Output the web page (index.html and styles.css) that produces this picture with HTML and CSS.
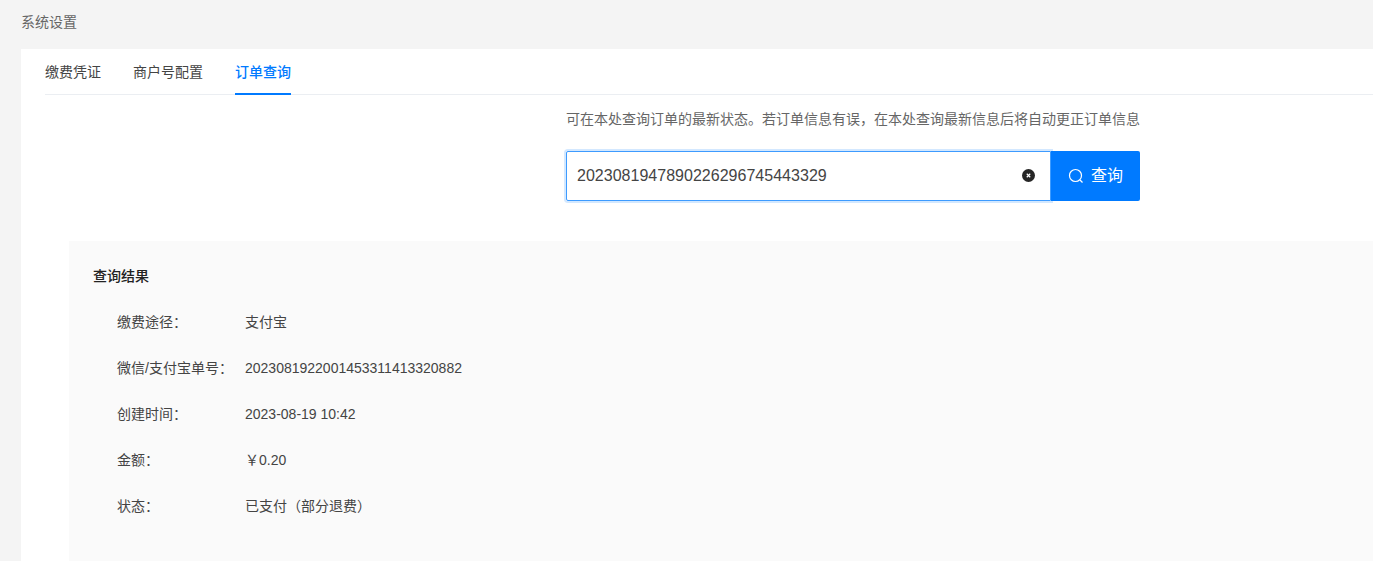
FILE: index.html
```html
<!DOCTYPE html>
<html>
	<head>
		<meta charset="utf-8" />
		<title>系统设置</title>
		<link rel="stylesheet" href="styles.css">
	</head>
	<body>
		<div class="crumb">系统设置</div>
		<div class="card">
			<ul class="tabs">
				<li>缴费凭证</li>
				<li>商户号配置</li>
				<li class="active">订单查询</li>
			</ul>

			<!--查询-->
			<div class="search">
				<p class="tip">可在本处查询订单的最新状态。若订单信息有误，在本处查询最新信息后将自动更正订单信息</p>
				<div class="search-bar">
					<div class="search-input">
						<span class="order-no">2023081947890226296745443329</span>
						<svg class="clear" width="13" height="13" viewBox="0 0 12 12">
							<circle cx="6" cy="6" r="6" fill="#262626"/>
							<path d="M4.4 4.4l3.2 3.2M7.6 4.4l-3.2 3.2" stroke="#fff" stroke-width="1.1" fill="none"/>
						</svg>
					</div>
					<button class="search-btn">
						<svg width="16" height="16" viewBox="0 0 16 16">
							<circle cx="7.5" cy="7.5" r="6" stroke="#fff" stroke-width="1.2" fill="none"/>
							<path d="M12 12l2.5 2.5" stroke="#fff" stroke-width="1.2" fill="none"/>
						</svg>
						<span class="btn-text">查询</span>
					</button>
				</div>
			</div>

			<!--查询结果-->
			<div class="result">
				<h3>查询结果</h3>
				<div class="row"><span class="label">缴费途径：</span><span>支付宝</span></div>
				<div class="row"><span class="label">微信/支付宝单号：</span><span>2023081922001453311413320882</span></div>
				<div class="row"><span class="label">创建时间：</span><span>2023-08-19 10:42</span></div>
				<div class="row"><span class="label">金额：</span><span>￥0.20</span></div>
				<div class="row"><span class="label">状态：</span><span>已支付（部分退费）</span></div>
			</div>
		</div>
	</body>
</html>
```

FILE: styles.css
```css
*{
	padding: 0;
	margin: 0;
	box-sizing: border-box;
}
ul{
	list-style: none;
}
html, body{
	height: 561px;
	overflow: hidden;
}
body{
	background-color: #f4f4f4;
	font-family: "Liberation Sans", "Noto Sans CJK SC", sans-serif;
	font-size: 14px;
	color: #444;
}
.crumb{
	height: 49px;
	padding-left: 21px;
	line-height: 44px;
	color: #666;
}
.card{
	margin-left: 21px;
	height: 512px;
	padding-left: 24px;
	background-color: #fff;
}
.tabs{
	display: flex;
	gap: 32px;
	height: 46px;
	border-bottom: 1px solid #ebeef2;
}
.tabs li{
	height: 46px;
	line-height: 46px;
	color: #444;
}
.tabs .active{
	color: #007aff;
	font-weight: 500;
	border-bottom: 2px solid #007aff;
}
.search{
	margin-left: 521px;
	width: 574px;
}
.tip{
	margin-top: 14px;
	line-height: 20px;
	color: #666;
}
.search-bar{
	display: flex;
	margin-top: 22px;
	height: 50px;
}
.search-input{
	flex: 1;
	display: flex;
	align-items: center;
	justify-content: space-between;
	padding: 0 15px 0 10px;
	border: 1px solid #3d9bff;
	border-radius: 2px 0 0 2px;
	box-shadow: 0 0 0 2px #d3e8ff;
	font-size: 16px;
	letter-spacing: 0.02px;
}
.clear{
	margin-top: -1px;
}
.search-btn{
	width: 89px;
	display: flex;
	align-items: center;
	justify-content: center;
	gap: 7px;
	border: 0;
	border-radius: 0 2px 2px 0;
	background-color: #007aff;
	color: #fff;
	font-family: inherit;
	font-size: 16px;
}
.btn-text{
	margin-top: -4px;
}
.result{
	margin: 40px 0 0 24px;
	height: 320px;
	padding: 24px 24px 0;
	background-color: #fafafa;
}
.result h3{
	font-size: 14px;
	font-weight: 500;
	line-height: 22px;
	color: #222;
}
.row{
	display: flex;
	margin-left: 24px;
	height: 22px;
	line-height: 22px;
	margin-top: 24px;
}
.label{
	width: 128px;
}
```
